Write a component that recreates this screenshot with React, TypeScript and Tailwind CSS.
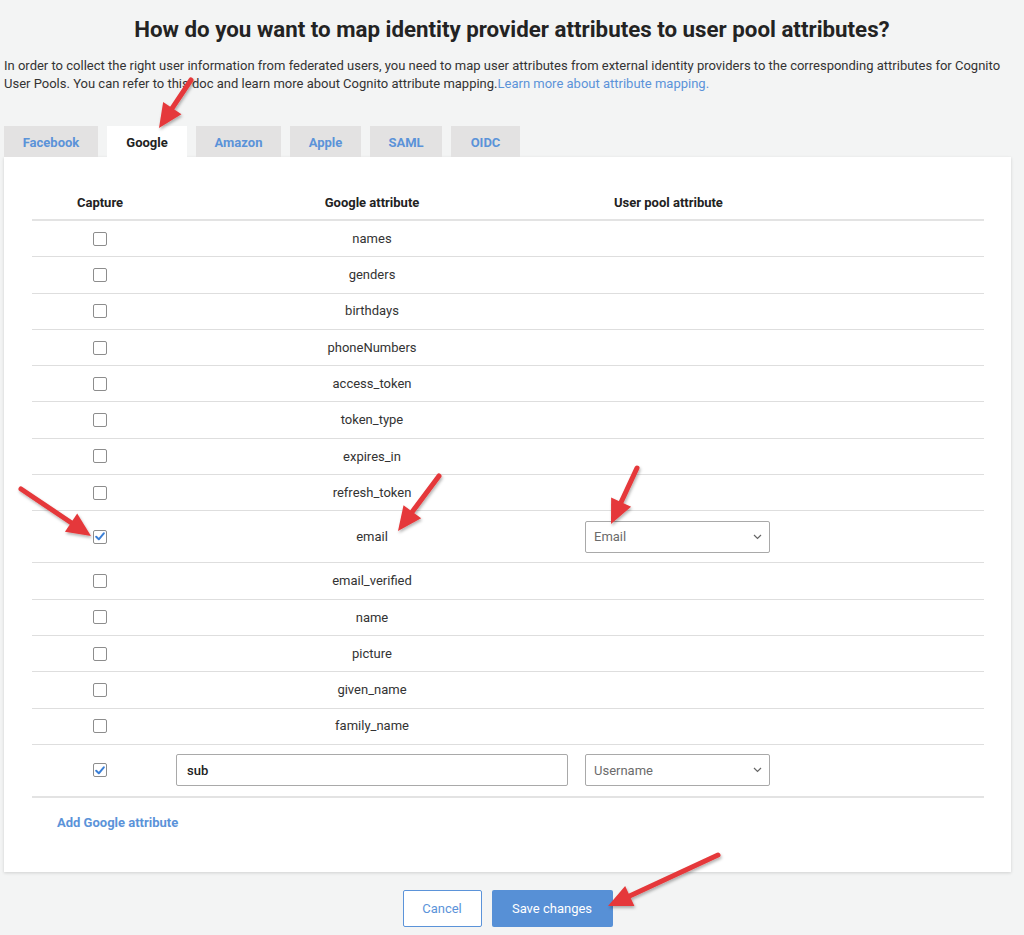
import React from "react";

const tabs = [
  { label: "Facebook", w: "w-[94px]" },
  { label: "Google", w: "w-[80px]", active: true },
  { label: "Amazon", w: "w-[85px]" },
  { label: "Apple", w: "w-[71px]" },
  { label: "SAML", w: "w-[72px]" },
  { label: "OIDC", w: "w-[69px]" },
];

const topRows = ["names", "genders", "birthdays", "phoneNumbers", "access_token", "token_type", "expires_in", "refresh_token"];
const midRows = ["email_verified", "name", "picture", "given_name", "family_name"];

function Checkbox({ checked }: { checked?: boolean }) {
  return (
    <span className="w-[14px] h-[14px] border border-[#8d8d8d] rounded-[2px] bg-white flex items-center justify-center">
      {checked && (
        <svg width="10" height="9" viewBox="0 0 10 9">
          <path d="M1.2 4.8 L3.8 7.3 L8.8 1.3" fill="none" stroke="#3b7fd6" strokeWidth="2" strokeLinecap="round" strokeLinejoin="round" />
        </svg>
      )}
    </span>
  );
}

function Select({ value }: { value: string }) {
  return (
    <div className="w-[185px] h-[32px] border border-[#a9a9a9] rounded-[2px] bg-white flex items-center justify-between pl-[8px] pr-[7px]">
      <span className="text-[13px] text-[#6b6b6b]">{value}</span>
      <svg width="9" height="6" viewBox="0 0 9 6">
        <path d="M1 1 L4.5 4.5 L8 1" fill="none" stroke="#666" strokeWidth="1.2" />
      </svg>
    </div>
  );
}

function AttrRow({ name }: { name: string }) {
  return (
    <div className="grid grid-cols-[136px_408px_1fr] h-[36.3px] border-b border-[#dedede] items-center">
      <div className="flex justify-center">
        <Checkbox />
      </div>
      <div className="text-center text-[13px] text-[#333]">{name}</div>
      <div />
    </div>
  );
}

// annotation arrows drawn on top of the screenshot
const arrows = [
  { x1: 191, y1: 80, x2: 159, y2: 128 },
  { x1: 21, y1: 489, x2: 91, y2: 536 },
  { x1: 439, y1: 476, x2: 398, y2: 531 },
  { x1: 637, y1: 468, x2: 611, y2: 524 },
  { x1: 718, y1: 855, x2: 608, y2: 906 },
];

function Arrow({ x1, y1, x2, y2 }: { x1: number; y1: number; x2: number; y2: number }) {
  const dx = x2 - x1;
  const dy = y2 - y1;
  const len = Math.hypot(dx, dy);
  const ux = dx / len;
  const uy = dy / len;
  const headLen = 24;
  const half = 11;
  const bx = x2 - ux * headLen;
  const by = y2 - uy * headLen;
  const pts = `${x2},${y2} ${bx - uy * half},${by + ux * half} ${bx + uy * half},${by - ux * half}`;
  return (
    <g>
      <line x1={x1} y1={y1} x2={bx + ux * 2} y2={by + uy * 2} stroke="#e5393a" strokeWidth="5" strokeLinecap="round" />
      <polygon points={pts} fill="#e5393a" />
    </g>
  );
}

export default function App() {
  return (
    <div className="relative w-[1024px] h-[935px] bg-[#f3f4f4] overflow-hidden" style={{ fontFamily: "Roboto, 'Liberation Sans', sans-serif" }}>
      <h1 className="pt-[16px] text-center text-[22.3px] leading-[26px] font-bold text-[#232323]">
        How do you want to map identity provider attributes to user pool attributes?
      </h1>
      <p className="mt-[15px] px-[4px] text-[13px] leading-[18px] text-[#333]">
        In order to collect the right user information from federated users, you need to map user attributes from external identity providers to the corresponding attributes for Cognito User Pools. You can refer to this doc and learn more about Cognito attribute mapping.
        <span className="text-[#5b93d9]">Learn more about attribute mapping.</span>
      </p>

      <div className="mt-[33px] ml-[4px] flex gap-[9px]">
        {tabs.map((t) => (
          <div
            key={t.label}
            className={`${t.w} h-[31px] pt-[3px] flex items-center justify-center text-[13px] font-bold ${
              t.active ? "bg-white text-[#222]" : "bg-[#e3e2e2] text-[#5b93d9]"
            }`}
          >
            {t.label}
          </div>
        ))}
      </div>

      <div className="mx-[4px] w-[1007px] h-[715px] bg-white shadow-[0_1px_3px_rgba(0,0,0,0.15)] pt-[30px] px-[28px]">
        <div className="w-[952px]">
          <div className="grid grid-cols-[136px_408px_1fr] h-[34px] border-b-2 border-[#e3e3e3] items-center text-[13px] font-bold text-[#222]">
            <div className="text-center">Capture</div>
            <div className="text-center">Google attribute</div>
            <div className="pl-[38px]">User pool attribute</div>
          </div>

          {topRows.map((r) => (
            <AttrRow key={r} name={r} />
          ))}

          <div className="grid grid-cols-[136px_408px_1fr] h-[52px] border-b border-[#dedede] items-center">
            <div className="flex justify-center">
              <Checkbox checked />
            </div>
            <div className="text-center text-[13px] text-[#333]">email</div>
            <div className="pl-[9px]">
              <Select value="Email" />
            </div>
          </div>

          {midRows.map((r) => (
            <AttrRow key={r} name={r} />
          ))}

          <div className="grid grid-cols-[136px_408px_1fr] h-[53px] border-b-2 border-[#e3e3e3] items-center">
            <div className="flex justify-center">
              <Checkbox checked />
            </div>
            <div className="px-[8px]">
              <div className="h-[32px] border border-[#a9a9a9] rounded-[2px] flex items-center pl-[10px] text-[13px] font-medium text-[#222]">
                sub
              </div>
            </div>
            <div className="pl-[9px]">
              <Select value="Username" />
            </div>
          </div>

          <div className="pt-[15px] pl-[25px] text-[13px] font-bold text-[#5b93d9]">Add Google attribute</div>
        </div>
      </div>

      <div className="mt-[18px] w-[1015px] flex justify-center gap-[10px]">
        <button className="w-[79px] h-[37px] border border-[#5b93d9] bg-white text-[13px] text-[#5b93d9] rounded-[2px]">
          Cancel
        </button>
        <button className="w-[121px] h-[37px] bg-[#5790d6] text-[13px] text-white rounded-[2px]">
          Save changes
        </button>
      </div>

      <svg className="absolute inset-0 pointer-events-none" width="1024" height="935" viewBox="0 0 1024 935">
        <defs>
          <filter id="sh" x="-20%" y="-20%" width="140%" height="140%">
            <feDropShadow dx="1" dy="2" stdDeviation="1.5" floodColor="#000" floodOpacity="0.3" />
          </filter>
        </defs>
        <g filter="url(#sh)">
          {arrows.map((a, i) => (
            <Arrow key={i} {...a} />
          ))}
        </g>
      </svg>
    </div>
  );
}
